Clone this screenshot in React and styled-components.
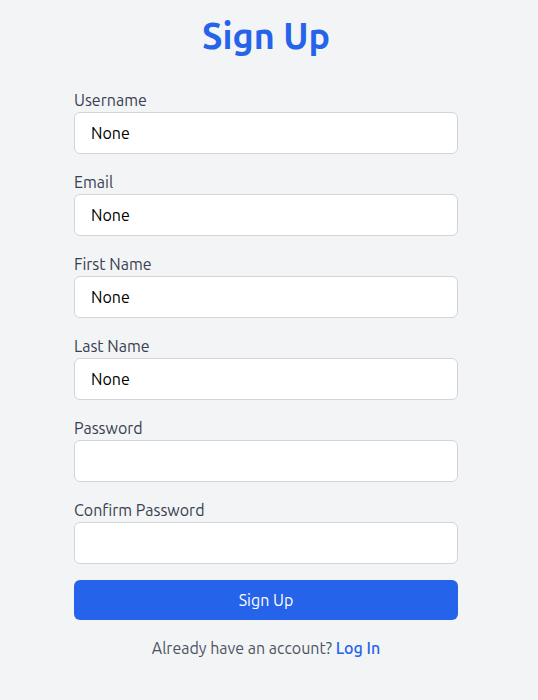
import React from "react";
import styled, { createGlobalStyle } from "styled-components";

const GlobalStyle = createGlobalStyle`
  *, *::before, *::after { box-sizing: border-box; }
  body {
    margin: 0;
    background: #f3f4f6;
    font-family: Ubuntu, "Noto Sans", sans-serif;
    font-size: 16px;
    line-height: 24px;
  }
`;

const Page = styled.main`
  display: flex;
  flex-direction: column;
  align-items: center;
  min-height: 100vh;
  padding: 16px 22px 40px 16px;
`;

const Title = styled.h1`
  margin: 0 0 32px;
  color: #2563eb;
  font-size: 36px;
  line-height: 40px;
  font-weight: 600;
`;

const Form = styled.form`
  display: flex;
  flex-direction: column;
  gap: 16px;
  width: 100%;
  max-width: 384px;
`;

const Field = styled.div`
  display: flex;
  flex-direction: column;
`;

const Label = styled.label`
  color: #374151;
`;

const Input = styled.input`
  width: 100%;
  padding: 8px 16px;
  border: 1px solid #d1d5db;
  border-radius: 6px;
  background: #ffffff;
  color: #000000;
  font: inherit;
`;

const SubmitButton = styled.button`
  padding: 8px 16px;
  border: 0;
  border-radius: 6px;
  background: #2563eb;
  color: #ffffff;
  font: inherit;
  cursor: pointer;
`;

const Footer = styled.p`
  margin: 16px 0 0;
  color: #4b5563;
`;

const LoginLink = styled.a`
  color: #2563eb;
  font-weight: 500;
  text-decoration: none;
`;

const fields = [
  { id: "username", label: "Username", type: "text", value: "None" },
  { id: "email", label: "Email", type: "text", value: "None" },
  { id: "first-name", label: "First Name", type: "text", value: "None" },
  { id: "last-name", label: "Last Name", type: "text", value: "None" },
  { id: "password", label: "Password", type: "password", value: "" },
  { id: "confirm-password", label: "Confirm Password", type: "password", value: "" },
];

export default function App() {
  return (
    <>
      <GlobalStyle />
      <Page>
        <Title>Sign Up</Title>
        <Form onSubmit={(event) => event.preventDefault()}>
          {fields.map(({ id, label, type, value }) => (
            <Field key={id}>
              <Label htmlFor={id}>{label}</Label>
              <Input id={id} name={id} type={type} defaultValue={value} />
            </Field>
          ))}
          <SubmitButton type="submit">Sign Up</SubmitButton>
        </Form>
        <Footer>
          Already have an account? <LoginLink href="#login">Log In</LoginLink>
        </Footer>
      </Page>
    </>
  );
}
